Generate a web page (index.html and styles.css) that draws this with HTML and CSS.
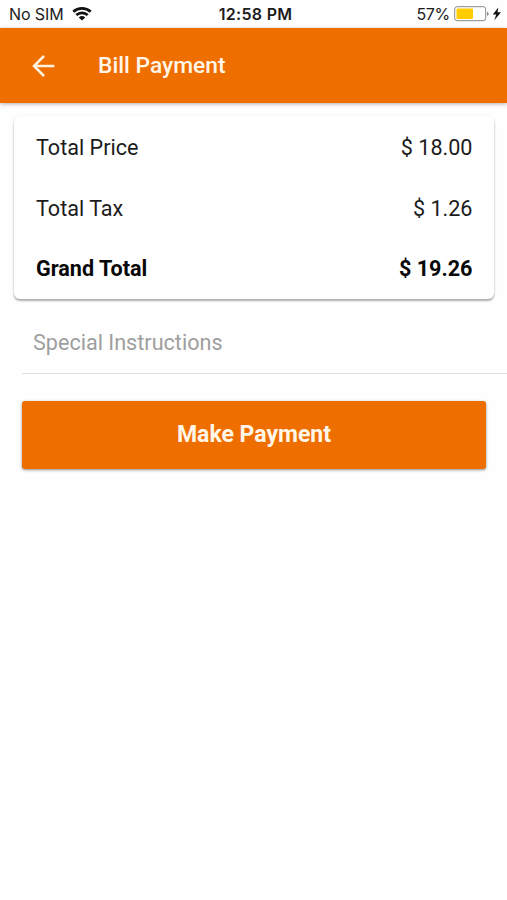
FILE: index.html
```
<!DOCTYPE html>
<html lang="en">
<head>
<meta charset="utf-8">
<title>Bill Payment</title>
<link rel="stylesheet" href="styles.css">
</head>
<body>
<div class="status">
  <div class="carrier"><span class="sim">No SIM</span>
    <svg class="wifi" width="20" height="14" viewBox="0 0 20 14"><path d="M1.300 4.800a12.800 12.800 0 0 1 17.400 0M4.300 8a8.500 8.500 0 0 1 11.400 0" fill="none" stroke="#111" stroke-width="2.700"/><path d="M10 13.500l-3.200-3.100a4.700 4.700 0 0 1 6.400 0z" fill="#111"/></svg>
  </div>
  <div class="time">12:58 PM</div>
  <div class="power"><span class="percent">57%</span>
    <svg class="battery" width="50" height="16" viewBox="0 0 50 16"><rect x=".7" y=".7" width="31" height="14" rx="2.500" fill="#fff" stroke="#888"/><rect x="2.500" y="2.500" width="16.500" height="10.500" rx="1" fill="#fc0"/><path d="M33 5.500q3.500 2.300 0 4.600z" fill="#888"/><path d="M44.300 1.500L38.800 8.500h3.400L40.300 14.200l6.700-7.900h-3.500z" fill="#111"/></svg>
  </div>
</div>
<header class="bar">
  <svg class="back" width="24" height="24" viewBox="0 0 24 24"><path d="M22.300 12H2.300M12 2L2 12l10 10" fill="none" stroke="#fff3e0" stroke-width="2.500"/></svg>
  <h1 class="title">Bill Payment</h1>
</header>
<main>
  <section class="card">
    <div class="row"><span>Total Price</span><span>$ 18.00</span></div>
    <div class="row"><span>Total Tax</span><span>$ 1.26</span></div>
    <div class="row total"><span>Grand Total</span><span>$ 19.26</span></div>
  </section>
  <div class="field">Special Instructions</div>
  <button class="pay">Make Payment</button>
</main>
</body>
</html>
```
FILE: styles.css
```
* { box-sizing: border-box; }
body { margin: 0; min-height: 900px; background: #fefefe; color: #1c1c1c; font-family: Roboto, sans-serif; }
.status { height: 28px; display: grid; grid-template-columns: 1fr auto 1fr; align-items: center; padding: 0 3px 0 9px; font: 16px Inter, sans-serif; }
.carrier, .power { display: flex; align-items: center; }
.carrier { gap: 8px; }
.sim { letter-spacing: -0.1px; }
.power { justify-content: flex-end; gap: 4px; }
.percent { letter-spacing: -0.3px; }
.time { font-weight: 600; letter-spacing: 0.3px; position: relative; left: -1px; }
.bar { height: 75px; background: #ee6e00; display: flex; align-items: center; padding-left: 32px; box-shadow: 0 1px 4px rgba(60,20,40,.35); }
.title { margin: 0 0 0 42px; font-size: 22.800px; font-weight: 500; color: #fff6e8; }
.card { margin: 13px 13px 0 14px; height: 183px; padding: 1px 21.500px 0 22px; border-radius: 6px; background: #fff; box-shadow: 0 2px 2px rgba(0,0,0,.26), 0 1px 3px rgba(0,0,0,.12); }
.row { height: 60.700px; display: flex; align-items: center; justify-content: space-between; font-size: 21.600px; }
.total { color: #080808; font-weight: 700; }
.field { margin: 13px 0 0 22px; height: 62px; padding-left: 11px; border-bottom: 1px solid #dedede; display: flex; align-items: center; font-size: 21.600px; color: #9e9e9e; }
.pay { display: block; margin: 27px 21px 0 22px; width: 464px; height: 68px; padding: 0 0 2px; border: 0; border-radius: 3px; background: #ee6e00; color: #fff6e8; font: 700 23px Roboto, sans-serif; box-shadow: 0 1px 3px rgba(0,0,0,.45); }
```
